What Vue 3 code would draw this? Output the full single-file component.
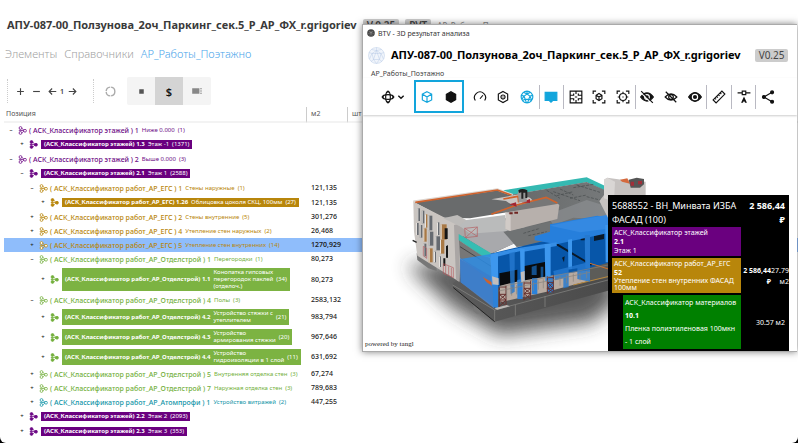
<script setup>
import { ref } from 'vue'

const rows = [
  { level: 0, color: 'purple', open: true, key: '( АСК_Классификатор этажей ) 1', name: 'Ниже 0.000', count: 1 },
  { level: 1, color: 'purple', boxed: true, key: '(АСК_Классификатор этажей) 1.3', name: 'Этаж -1', count: 1371 },
  { level: 0, color: 'purple', open: true, key: '( АСК_Классификатор этажей ) 2', name: 'Выше 0.000', count: 3 },
  { level: 1, color: 'purple', open: true, boxed: true, key: '(АСК_Классификатор этажей) 2.1', name: 'Этаж 1', count: 2588 },
  { level: 2, color: 'gold', open: true, key: '( АСК_Классификатор работ_АР_ЕГС ) 1', name: 'Стены наружные', count: 1, area: '121,135' },
  { level: 3, color: 'gold', boxed: true, key: '(АСК_Классификатор работ_АР_ЕГС) 1.26', name: 'Облицовка цоколя СКЦ, 100мм', count: 27, area: '121,135' },
  { level: 2, color: 'gold', key: '( АСК_Классификатор работ_АР_ЕГС ) 2', name: 'Стены внутренние', count: 5, area: '301,276' },
  { level: 2, color: 'gold', key: '( АСК_Классификатор работ_АР_ЕГС ) 4', name: 'Утепление стен наружных', count: 2, area: '26,468' },
  { level: 2, color: 'gold', selected: true, key: '( АСК_Классификатор работ_АР_ЕГС ) 5', name: 'Утепление стен внутренних', count: 14, area: '1270,929' },
  { level: 2, color: 'green', open: true, key: '( АСК_Классификатор работ_АР_Отделстрой ) 1', name: 'Перегородки', count: 1, area: '80,273' },
  { level: 3, color: 'green', boxed: true, lines: ['Конопатка гипсовых', 'перегородок паклей', '(отделоч.)'], key: '(АСК_Классификатор работ_АР_Отделстрой) 1.1', count: 34, area: '80,273' },
  { level: 2, color: 'green', open: true, key: '( АСК_Классификатор работ_АР_Отделстрой ) 4', name: 'Полы', count: 3, area: '2583,132' },
  { level: 3, color: 'green', boxed: true, lines: ['Устройство стяжки с', 'утеплителем'], key: '(АСК_Классификатор работ_АР_Отделстрой) 4.2', count: 21, area: '983,794' },
  { level: 3, color: 'green', boxed: true, lines: ['Устройство', 'армирования стяжки'], key: '(АСК_Классификатор работ_АР_Отделстрой) 4.3', count: 20, area: '967,646' },
  { level: 3, color: 'green', boxed: true, lines: ['Устройство', 'гидроизоляции в 1 слой'], key: '(АСК_Классификатор работ_АР_Отделстрой) 4.4', count: 11, area: '631,692' },
  { level: 2, color: 'green', key: '( АСК_Классификатор работ_АР_Отделстрой ) 5', name: 'Внутренняя отделка стен', count: 3, area: '67,274' },
  { level: 2, color: 'green', key: '( АСК_Классификатор работ_АР_Отделстрой ) 7', name: 'Наружная отделка стен', count: 3, area: '789,683' },
  { level: 2, color: 'teal', key: '( АСК_Классификатор работ_АР_Атомпрофи ) 1', name: 'Устройство витражей', count: 2, area: '447,255' },
  { level: 1, color: 'purple', boxed: true, key: '(АСК_Классификатор этажей) 2.2', name: 'Этаж 2', count: 2093 },
  { level: 1, color: 'purple', boxed: true, key: '(АСК_Классификатор этажей) 2.3', name: 'Этаж 3', count: 353 },
]

const selected = ref(rows.findIndex((r) => r.selected))

const windowsOnFacade = [
  [172, 130, 8, 38], [185, 137, 8, 38], [195, 148, 7, 40], [205, 152, 12, 44], [231, 172, 7, 38], [242, 178, 18, 46],
  [168, 174, 8, 36], [179, 180, 8, 38], [190, 190, 10, 40], [206, 200, 14, 42], [226, 214, 14, 42], [240, 224, 13, 42], [258, 240, 6, 38],
  [190, 236, 9, 38], [206, 250, 12, 42], [222, 260, 6, 32], [237, 274, 6, 32],
]

const tools = [
  { name: 'Нагрузка', sep: false, d: 'M4 18A9.5 9.500 0 1 1 20 18M12 15L17 9' },
  { name: 'Крепёж', sep: false, d: 'M12 2.5L20 7V17L12 21.5L4 17V7ZM12 8.5A3.5 3.5 0 1 0 12 15.5A3.5 3.5 0 1 0 12 8.5M12 11V13' },
  { name: 'Сетка', sep: false, cls: 'cyan', d: 'M12 2A10 10 0 1 0 12 22A10 10 0 1 0 12 2M12 7L17 10.5L15 16H9L7 10.5ZM12 2V7L18 4M12 7L6 4M17 10.5L22 9M17 10.5L20 17M15 16L20 18M15 16L13 22M9 16L11 22M9 16L4 18M7 10.5L2 9M7 10.5L3 16' },
  { name: 'Комментарии', sep: true, cls: 'cyan fill', d: 'M2 4H22V18H15L12 21L9 18H2Z' },
  { name: 'Вписать', sep: true, d: 'M2 2H22V22H2ZM2 9H8V6M22 9H16V6M2 15H8V18M22 15H16V18M12 2V7M12 17V22M10 12H14' },
  { name: 'Вписать модель', sep: false, d: 'M2 7V2H7M17 2H22V7M22 17V22H17M7 22H2V17M12 6L17 9V15L12 18L7 15V9ZM7 9L12 12L17 9M12 12V18' },
  { name: 'Вписать выбранное', sep: false, d: 'M2 7V2H7M17 2H22V7M22 17V22H17M7 22H2V17M12 6A6 6 0 1 0 12 18A6 6 0 1 0 12 6M12 11V13M12 3V6M12 18V21M3 12H6M18 12H21' },
  { name: 'Скрыть', sep: true, cls: 'eye-hidden', d: 'M1 12Q12 -2 23 12Q12 26 1 12Z' },
  { name: 'Скрыть остальные', sep: false, d: 'M2 12Q12 1 22 12Q12 23 2 12ZM12 8A4 4 0 1 0 12 16A4 4 0 1 0 12 8M3 3L21 21' },
  { name: 'Показать', sep: false, cls: 'eye-shown', d: 'M1 12Q12 -3 23 12Q12 27 1 12Z' },
  { name: 'Измерить', sep: true, d: 'M2 17L17 2L22 7L7 22ZM14 5L16 7M11 8L13 10M8 11L10 13M5 14L7 16' },
  { name: 'Сечение', sep: true, cls: 'section', d: 'M1 5H9M15 5H23M9 2H15V8H9Z' },
  { name: 'Поделиться', sep: true, cls: 'share', d: 'M19 4L5 12L19 20' },
]
</script>

<template>
  <main class="app">
    <header class="head">
      <h1>АПУ-087-00_Ползунова_2оч_Паркинг_сек.5_Р_АР_ФХ_r.grigoriev</h1>
      <span class="tag">V.0.25</span>
      <span class="tag">РVТ</span>
      <span class="view-name">АР_Работы_Поэтажно</span>
    </header>

    <nav class="tabs">
      <a href="#elements">Элементы</a>
      <a href="#catalogs">Справочники</a>
      <a href="#works" class="current">АР_Работы_Поэтажно</a>
    </nav>

    <div class="bar">
      <div class="levels">
        <button aria-label="Развернуть"><svg viewBox="0 0 24 24"><path d="M12 3V21M3 12H21" /></svg></button>
        <button aria-label="Свернуть"><svg viewBox="0 0 24 24"><path d="M3 12H21" /></svg></button>
        <div class="stepper">
          <button aria-label="Назад"><svg viewBox="0 0 24 24"><path d="M22 12H4M11 4L3 12L11 20" /></svg></button>
          <span>1</span>
          <button aria-label="Вперёд"><svg viewBox="0 0 24 24"><path d="M2 12H20M13 4L21 12L13 20" /></svg></button>
        </div>
      </div>
      <button class="ring" aria-label="Обновить"><svg viewBox="0 0 24 24"><circle cx="12" cy="12" r="9.5" stroke-dasharray="13 2" /></svg></button>
      <div class="modes">
        <button aria-label="Объём"><svg viewBox="0 0 24 24"><path class="solid" d="M6 6H18V18H6Z" /></svg></button>
        <button class="on" aria-label="Стоимость">$</button>
        <button aria-label="Список"><svg class="wide" viewBox="0 0 30 24"><path class="solid" d="M3 5H21V19H3ZM23 5H27V7H23ZM23 9H27V11H23ZM23 13H27V15H23ZM23 17H27V19H23Z" /></svg></button>
      </div>
    </div>

    <table class="tree">
      <colgroup><col class="c-pos"><col class="c-area"><col></colgroup>
      <thead>
        <tr><th>Позиция</th><th class="unit">м2</th><th class="unit">шт</th></tr>
      </thead>
      <tbody>
        <tr v-for="(r, i) in rows" :key="r.key" :class="{ selected: i === selected }" @click="selected = i">
          <td>
            <div class="node" :class="[r.color, 'level-' + r.level, { boxed: r.boxed, multi: r.lines }]">
              <button class="toggle" :aria-label="r.open ? 'Свернуть' : 'Развернуть'">{{ r.open ? '–' : '+' }}</button>
              <svg class="kind" viewBox="0 0 18 18">
                <path d="M6 4Q10 5 12 9M5 9H12M6 14Q10 13 12 10" />
                <circle cx="5" cy="4" r="2.8" /><circle cx="5" cy="14" r="2.8" /><circle cx="14" cy="9.5" r="2.8" /><circle cx="4" cy="9" r="1.4" />
              </svg>
              <span class="label">
                <b>{{ r.key }}</b>
                <span v-if="r.lines" class="stack"><span v-for="l in r.lines" :key="l">{{ l }}</span></span>
                <span v-else class="name">{{ r.name }}</span>
                <span class="count">({{ r.count }})</span>
              </span>
            </div>
          </td>
          <td class="num">{{ r.area }}</td>
          <td></td>
        </tr>
      </tbody>
    </table>

    <section class="window" aria-label="3D результат анализа">
      <div class="caption">
        <svg viewBox="0 0 20 20"><circle cx="10" cy="10" r="9.5" fill="#444" /><path d="M4 5L10 8L16 5M3 12L10 8L17 12M7 17L10 8L13 17" stroke="#aaa" fill="none" /></svg>
        BTV - 3D результат анализа
      </div>
      <div class="model-title">
        <svg viewBox="0 0 34 34"><circle cx="17" cy="17" r="16" /><path d="M17 7L26 13L23 25H11L8 13ZM17 7V1M26 13L32 11M23 25L28 29M11 25L6 29M8 13L2 11M17 7L27 5M17 7L7 5M26 13L31 24M8 13L3 24M11 25L17 33L23 25M17 7L11 25M17 7L23 25M8 13H26" /></svg>
        <h2>АПУ-087-00_Ползунова_2оч_Паркинг_сек.5_Р_АР_ФХ_r.grigoriev</h2>
        <span class="tag">V0.25</span>
      </div>
      <p class="sub">АР_Работы_Поэтажно</p>
      <div class="tools">
        <button aria-label="Вращение"><svg viewBox="0 0 24 24"><ellipse cx="12" cy="12" rx="4" ry="9" /><ellipse cx="12" cy="12" rx="9" ry="4" /><path d="M9 5L12 2L15 5M9 19L12 22L15 19M5 9L2 12L5 15M19 9L22 12L19 15" /></svg></button>
        <button class="drop" aria-label="Ещё"><svg viewBox="0 0 24 24"><path d="M4 8L12 16L20 8" /></svg></button>
        <div class="shape">
          <button class="cyan" aria-label="Каркас"><svg viewBox="0 0 24 24"><path d="M12 3L20 7V17L12 21L4 17V7ZM4 7L12 12L20 7M12 12V21" /></svg></button>
          <button class="fill" aria-label="Тело"><svg viewBox="0 0 24 24"><path d="M12 3L20 7.500V16.500L12 21L4 16.500V7.500Z" /></svg></button>
        </div>
        <div class="actions">
          <button v-for="t in tools" :key="t.name" :class="[t.cls, { sep: t.sep }]" :aria-label="t.name">
            <svg viewBox="0 0 24 24">
              <path :d="t.d" />
              <template v-if="t.cls === 'eye-hidden'"><circle cx="12" cy="12" r="4" class="ring-white" /><path d="M1 4L20 23" class="ring-white" /><path d="M2 2L22 22" /></template>
              <circle v-if="t.cls === 'eye-shown'" cx="12" cy="12" r="4.500" class="ring-white" />
              <path v-if="t.cls === 'section'" class="solid" d="M12 11L17 22H14L12 19L10 22H7Z" />
              <template v-if="t.cls === 'share'"><circle cx="19" cy="4" r="2.500" /><circle cx="5" cy="12" r="2.500" /><circle cx="19" cy="20" r="2.500" /></template>
            </svg>
          </button>
        </div>
      </div>

      <div class="stage">
        <svg class="model" viewBox="9 -150 1302 708" role="img" aria-label="Модель здания">
          <defs>
            <filter id="soft" x="-20%" y="-40%" width="140%" height="180%"><feGaussianBlur stdDeviation="28" /></filter>
            <linearGradient id="slab" x1="0" y1="0" x2="1" y2="0"><stop offset="0" stop-color="#5b5b5b" /><stop offset="1" stop-color="#4a4a4a" /></linearGradient>
            <linearGradient id="deck" x1="0" y1="0" x2="1" y2="0"><stop offset="0" stop-color="#5e6061" /><stop offset="1" stop-color="#777a7b" /></linearGradient>
          </defs>
          <path d="M140 300L300 290L700 300L790 390L700 470L420 510L280 430Z" fill="#333" opacity=".8" filter="url(#soft)" />

          <path d="M340 415H362V444L350 446L340 438ZM170 265L230 300V318L205 310L172 285Z" fill="#777" />
          <path d="M278 355L300 340L400 405L755 330V374L404 470L280 368Z" fill="url(#slab)" />
          <path d="M278 360L404 435L755 342M404 435V470M466 420V452M555 394V426" fill="none" stroke="#8b8b88" stroke-width="2" />
          <path d="M280 368L404 470" stroke="#222" stroke-width="3" />

          <path d="M160 110L412 74L470 92L450 140L330 160L250 158Z" fill="#696b6c" />
          <path d="M430 76L680 37L750 70V84L680 52L452 90Z" fill="#35b9b2" />
          <path d="M450 90L680 51L755 84V170L560 190L392 268L296 208L440 158Z" fill="url(#deck)" />
          <path d="M297 206L440 165L536 205L392 266Z" fill="#a8a9ac" />
          <path d="M430 200L600 165L640 180L530 240L470 246Z" fill="#707374" />
          <path d="M560 150L680 105L755 128V165L640 158L580 180Z" fill="#8c8f91" opacity=".7" />
          <path d="M560 76L600 100M580 80L660 107M600 72L640 90M650 60L720 82M590 92L640 80M630 100L680 90M640 68L700 58M490 205L540 190M505 212L560 200M680 95L740 110" stroke="#464a4b" stroke-width="2" stroke-dasharray="9 4" fill="none" />

          <path d="M160 110L302 182L298 350L172 272L162 200Z" fill="#cac5c1" />
          <path d="M282 180L322 170L330 206L300 216L298 350L288 344Z" fill="#aaa6a5" />
          <path d="M250 160L292 150L345 180L302 185Z" fill="#bdbbb9" />
          <path d="M160 110L412 73L458 90" fill="none" stroke="#ddd5cf" stroke-width="7" />
          <path d="M166 112L412 75L455 91" fill="none" stroke="#d0622c" stroke-width="5" />
          <path d="M320 165L435 150L440 198L330 206L298 182Z" fill="#babbbb" />
          <g v-for="(w, i) in windowsOnFacade" :key="i">
            <rect :x="w[0]" :y="w[1]" :width="w[2]" :height="w[3]" :fill="i % 3 === 2 ? '#a97945' : '#666a70'" />
            <rect :x="w[0]" :y="w[1]" width="3" :height="w[3]" fill="#e7e3df" />
          </g>
          <path d="M254 190H263V222H254ZM258 242H264V278H258ZM250 280H256V302H250Z" fill="#151515" />
          <path d="M190 244V272L200 280V250ZM250 296L280 308V338L250 325ZM257 300V328M266 304V332M274 308V336M314 190L352 186V214L316 218ZM314 190L352 214M316 218L352 186" fill="none" stroke="#b45d61" stroke-width="2" />
          <path d="M158 226L170 232" stroke="#222" stroke-width="4" />

          <path d="M440 140L588 112L598 120L592 162L450 198L436 192Z" fill="#b7b0ac" />
          <path d="M436 138L452 150V198L436 192Z" fill="#d1cbc7" />
          <path d="M400 140L555 96L596 116L440 142Z" fill="#777" />
          <path d="M394 103L476 88L510 98L520 108L462 124L438 108Z" fill="#c9c5c3" />
          <path d="M394 148L470 120L558 97L592 114M430 102L474 94L476 112" fill="none" stroke="#d0622c" stroke-width="5" />
          <path d="M448 118L468 112L470 125ZM485 112L510 102V114Z" fill="#a32632" />
          <path d="M474 80L500 74V110L476 112Z" fill="#999" />
          <path d="M475 76Q486 68 502 76V99H496V83H490V101H484V82L477 84Z" fill="#222" />
          <path d="M448 142H458V148H448ZM463 140H474V146H463Z" fill="#6f2522" />

          <path d="M296 207L392 264V276L366 274L296 226Z" fill="#36bdb3" />
          <path d="M297 226L366 272L390 278L395 340L300 280Z" fill="#777" />
          <path d="M300 245L395 305" stroke="#444" stroke-width="3" />

          <path d="M300 282L402 345V430L302 352Z" fill="#4c80c2" />
          <path d="M302 282L398 266L412 350L400 350Z" fill="#2d8ce4" opacity=".85" />
          <path d="M300 278L402 340L412 430L302 352Z" fill="#397dcc" opacity=".72" />
          <path d="M368 336L396 352V362L380 352Z" fill="#d0622c" />
          <path d="M392 266L755 180V320L690 345L585 355L410 370Z" fill="#0756a9" />
          <path d="M418 325L472 314V355L420 366ZM490 304L558 290V338L496 350Z" fill="#090b0d" />
          <path d="M515 305L530 301V330H515ZM542 305H550V340H542Z" fill="#14508c" />
          <path d="M590 237L695 300L592 240Z" stroke="#0b1927" stroke-width="5" />
          <path d="M702 212L732 204V222L702 228ZM662 215L682 208V226H662Z" fill="#0b1927" />
          <path d="M606 278L614 274L612 292Z" fill="#0b1927" />
          <path d="M420 362L470 350L585 330L690 315L755 298V330L560 380L420 412Z" fill="#b8aaa0" />
          <path d="M690 308L755 290V337L690 348Z" fill="#5c5c58" />
          <path d="M640 360L755 332" stroke="#b7893e" stroke-width="3" />
          <path d="M690 295L755 315" stroke="#d0722c" stroke-width="3" />

          <path d="M524 214L570 200V178L712 152L755 160V202L590 238L524 226Z" fill="#267fdc" />
          <path d="M636 168L740 150L755 154V190L660 202L570 182Z" fill="#3489e2" />
          <path d="M388 268L480 248L482 258L392 280ZM480 248L590 232V243L482 262Z" fill="#358de5" />
          <path d="M392 268L414 265V360H395ZM480 250L494 252V348H482ZM554 238L572 236V350L556 348ZM624 224L636 222V312H625ZM736 180H748V292H737Z" fill="#3d97ee" />
          <path d="M448 264L464 260V380L452 388ZM580 318L690 290V350L652 342V310L626 314V366L610 370V340L585 346Z" fill="#2579d0" opacity=".82" />
          <path d="M674 210H690V310H676Z" fill="#2579d0" />
          <path d="M398 360H414V430L400 426ZM472 345L488 342V402H472ZM516 340H532V388H516ZM560 335H582V382H562Z" fill="#2c81d9" />
          <path d="M396 334L416 340V360L398 358ZM482 322L494 318V350L484 352Z" fill="#c3bdba" />
          <g fill="none" stroke="#66302e" stroke-width="3">
            <path d="M418 366V428M438 362V424M418 366H438M418 388H438M418 405H438M418 388L438 405L418 424M438 388L418 405L438 424" />
            <path d="M492 350V406M512 346V402M492 354H512M492 370H512M492 386H512M492 370L512 386L494 404M512 370L492 386L512 402" />
            <path d="M562 334V386M580 330V382M562 338H580M562 352H580M562 370H580M562 352L580 370L562 384M580 352L562 370L580 382" />
          </g>
          <path d="M416 366L755 298M416 378L690 322M440 366V396M455 364V392M470 360V388M520 350V378M535 346V374M550 343V370M600 334V362M620 330V355M640 326V350M660 322V346M680 318V340" fill="none" stroke="#88847c" stroke-width="2" />
          <path d="M403 430L440 420L450 424L412 434Z" fill="#bdbab7" />

          <path d="M732 44L742 38L785 44L857 50V180H755L718 108L732 90Z" fill="#c6c2c0" />
          <path d="M732 44L742 38L765 50L762 110L732 100Z" fill="#d9d6d4" />
          <path d="M780 44L802 40L810 56L786 50Z" fill="#d4693d" />
          <path d="M806 44L830 38L852 42V58L840 68H812Z" fill="#555" />
          <path d="M812 50H822V62H812ZM834 48H846V58H834Z" fill="#a12e38" />
        </svg>

        <aside class="tip">
          <div class="tip-head"><span>5688552 - ВН_Минвата ИЗБА ФАСАД (100)</span><b>2 586,44 ₽</b></div>
          <div class="tip-row">
            <div class="card purple-bg">АСК_Классификатор этажей<br><b>2.1</b><br>Этаж 1</div>
          </div>
          <div class="tip-row">
            <div class="card gold-bg">АСК_Классификатор работ_АР_ЕГС<br><b>52</b><br><span class="tight">Утепление стен внутренних ФАСАД 100мм</span></div>
            <b class="price">2 586,44 ₽</b><span class="qty">27.79 м2</span>
          </div>
          <div class="tip-row">
            <div class="card green-bg">АСК_Классификатор материалов<br><b>10.1</b><br>Пленка полиэтиленовая 100мкн - 1 слой</div>
            <span class="mass">30.57 м2</span>
          </div>
          <div class="tip-row"><div class="card green-bg"></div></div>
        </aside>
        <span class="credit">powered by tangl</span>
      </div>
    </section>
  </main>
</template>

<style>
body { background: #000; }
</style>

<style scoped>
* { box-sizing: border-box; }
.app {
  position: relative;
  min-height: 100vh;
  padding-top: 16px;
  background: #fff;
  border-radius: 0 0 6px 6px;
  overflow: hidden;
  color: #333;
  font-family: "Noto Sans", "Open Sans", sans-serif;
}
button {
  display: flex; align-items: center; justify-content: center;
  padding: 0; border: 0; background: none; color: inherit; font: inherit;
}
button svg { width: 14px; height: 14px; fill: none; stroke: currentColor; stroke-width: 2; }
h1, h2, p { margin: 0; }
.head { display: flex; align-items: center; gap: 6px; height: 18px; padding-left: 7px; white-space: nowrap; }
h1 { font-size: 11px; line-height: 16px; font-weight: 700; color: #3a3a3a; }
.tag { padding: 0 4px; background: #ccc; border-radius: 2px; font-size: 10px; line-height: 13px; color: #444; }
.head .tag { font-weight: 600; }
.view-name { font-size: 8px; color: #888; }

.tabs { display: flex; gap: 7px; padding: 11px 5px 0; font-size: 11px; line-height: 18px; font-weight: 300; }
.tabs a { color: #a2a2a2; text-decoration: none; }
.tabs .current { color: #4aa5ea; }

.bar { display: flex; align-items: center; height: 28px; margin: 14px 0 0 7px; color: #444; }
.levels { display: flex; align-items: center; gap: 6px; width: 87px; height: 24px; padding-left: 7px; border: dotted #ccc; border-width: 0 1px; }
.levels button { width: 10px; }
.levels svg { width: 9px; height: 9px; stroke-width: 3; }
.stepper { display: flex; align-items: center; gap: 3px; font-size: 7px; font-weight: 600; }
.ring { width: 33px; color: #aaa; }
.ring svg { width: 11px; height: 11px; stroke-width: 3; }
.modes { display: flex; background: #f4f4f4; border-radius: 2px; }
.modes button { width: 28px; height: 28px; font-size: 11px; font-weight: 600; color: #555; }
.modes svg { width: 9px; height: 9px; }
.modes svg.wide { width: 12px; height: 10px; color: #888; }
.modes .on { background: #d4d4d4; color: #111; }
.solid { fill: currentColor; stroke: none; }

.tree { width: calc(100% - 4px); margin: 2px 0 0 4px; border-collapse: separate; border-spacing: 0; table-layout: fixed; }
.c-pos { width: 302px; }
.c-area { width: 41px; }
th, td { padding: 0; text-align: left; }
th { height: 16px; border-bottom: 2px solid #f3f3f3; font-size: 7px; line-height: 14px; font-weight: 400; color: #555; }
th:first-child { padding-left: 2px; }
th.unit { padding-left: 4px; border-left: 1px solid #ccc; }
.num { padding-left: 5px; font-size: 7px; font-weight: 500; line-height: 10px; color: #222; white-space: nowrap; }
.selected td { background: #8fbdfb; }
.selected .num { font-weight: 600; }
.node { display: flex; align-items: center; gap: 2px; height: 14px; padding-left: 2px; font-size: 6px; line-height: 7px; white-space: nowrap; }
.node b { font-size: 7px; font-weight: 500; }
.node.boxed { height: 15px; }
.node.boxed b { font-size: 6px; font-weight: 700; }
.node.multi { height: auto; padding-top: 2px; padding-bottom: 2px; }
.level-1 { padding-left: 13px; }
.level-2 { padding-left: 23px; }
.level-3 { padding-left: 34px; }
.toggle { width: 10px; height: 7px; font-size: 6px; font-weight: 600; color: #222; }
.kind { width: 9px; height: 9px; fill: #fff; stroke: currentColor; stroke-width: 1.5; }
.boxed .kind { fill: currentColor; }
.kind path { fill: none; }
.label { display: flex; align-items: center; gap: 3px; }
.stack { display: flex; flex-direction: column; }
.boxed .label { margin-left: 1px; padding: 1px 3px; color: #fff; }
.purple { color: #6d0a85; } .gold { color: #b8860b; } .green { color: #74b03d; } .teal { color: #1395a8; }
.purple.boxed .label { background: #6a007f; }
.gold.boxed .label { background: #b8860b; }
.green.boxed .label { background: #7cb342; }

.window {
  position: absolute; top: 24px; left: 362px; right: 1px;
  background: #fff; border: 1px solid #aaa; border-width: 1px 0 1px 1px;
  box-shadow: 0 0 7px rgba(0, 0, 0, .5);
}
.caption { display: flex; align-items: center; gap: 3px; height: 16px; padding-left: 4px; font-size: 7px; color: #333; }
.caption svg { width: 8px; height: 8px; }
.model-title { display: flex; align-items: center; gap: 6px; height: 28px; padding-left: 5px; white-space: nowrap; }
.model-title svg { width: 17px; height: 17px; flex: none; fill: #f1f5fb; stroke: #b9cbe6; }
h2 { font-size: 11px; line-height: 16px; font-weight: 700; color: #000; }
.model-title .tag { margin-left: 8px; }
.sub { padding-left: 8px; font-size: 7px; line-height: 9px; color: #444; }
.tools { display: flex; align-items: center; height: 37px; padding: 0 17px 0 16px; color: #111; box-shadow: 0 1px 2px #ccc; }
.tools button { width: 24px; height: 24px; }
.tools .drop { width: 12px; margin: 0 8px 0 -1px; }
.drop svg { width: 8px; height: 8px; stroke-width: 4; }
.shape { display: flex; align-items: center; height: 33px; padding: 0 1px; box-shadow: inset 0 0 0 2px #12a5dc; }
.actions { display: flex; flex: 1; padding-left: 4px; }
.tools .actions button { flex: 1; }
.actions .sep { border-left: 1px solid #b9b9c2; }
.cyan { color: #12a5dc; }
.fill svg, .eye-hidden svg, .eye-shown svg, .actions .fill svg { fill: currentColor; }
.share circle { fill: currentColor; }
.ring-white { fill: none; stroke: #fff; }

.stage { position: relative; overflow: hidden; }
.model { display: block; width: 100%; }
.credit { position: absolute; left: 2px; bottom: 2px; font: 7px/10px "Liberation Serif", serif; color: #222; }
.tip { position: absolute; top: 80px; right: 8px; width: 181px; padding: 4px 0 0 4px; background: #000; color: #fff; font-size: 7px; }
.tip-head { display: flex; justify-content: space-between; padding-right: 4px; font-size: 9px; line-height: 14px; }
.tip-head span { width: 126px; }
.tip-head b { width: 42px; text-align: right; }
.tip-row { display: flex; align-items: center; margin-bottom: 2px; }
.card { flex: none; width: 129px; min-height: 24px; padding: 1px 2px; line-height: 9px; }
.tight { display: block; line-height: 7px; padding-bottom: 1px; }
.purple-bg { background: #6a007f; }
.gold-bg { background: #b8860b; }
.green-bg { width: 118px; margin-left: 11px; line-height: 13px; background: #008000; }
.price { width: 30px; text-align: right; line-height: 11px; white-space: normal; }
.qty { width: 18px; text-align: right; line-height: 11px; }
.mass { flex: 1; padding-right: 4px; text-align: right; }
</style>
